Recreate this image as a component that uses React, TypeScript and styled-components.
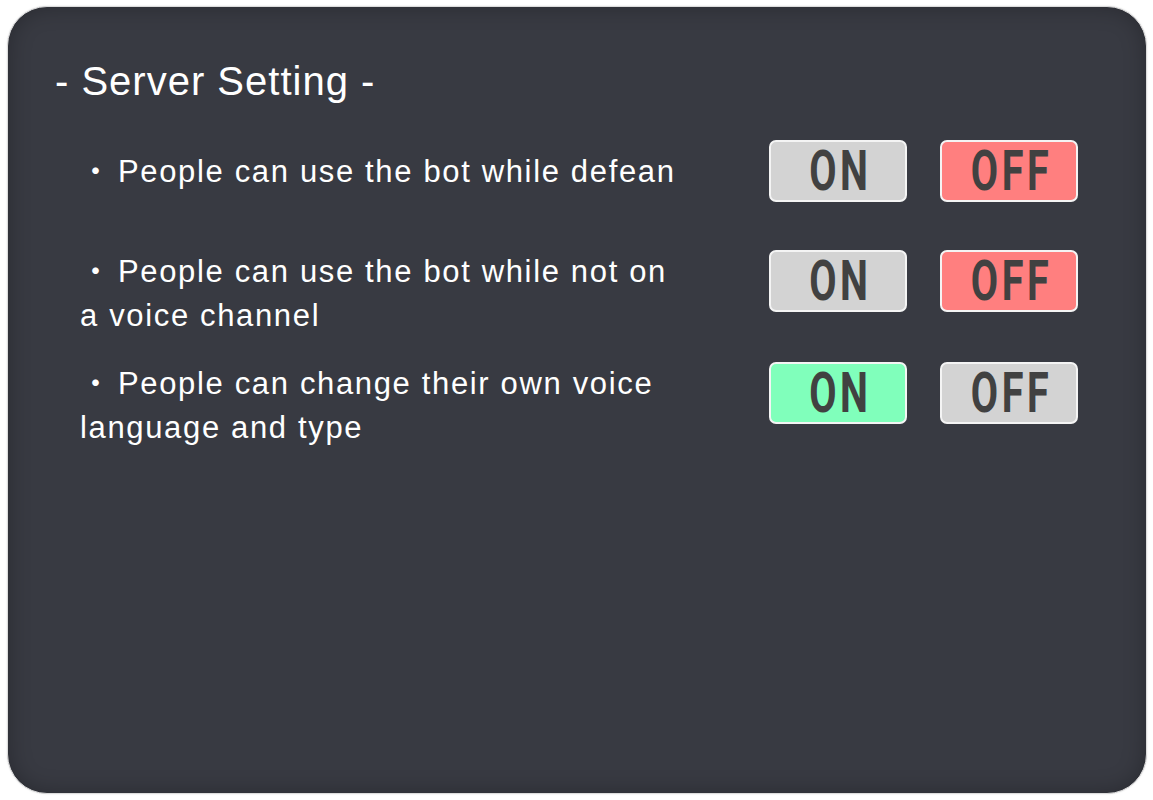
import React from "react";
import styled, { createGlobalStyle } from "styled-components";

const Global = createGlobalStyle`
  html, body { margin: 0; padding: 0; background: #ffffff; }
  body { font-family: "Liberation Sans", "Noto Sans CJK JP", sans-serif; }
`;

const Page = styled.div`
  width: 1153px;
  height: 800px;
  padding: 6px 6px 6px 7px;
  box-sizing: border-box;
`;

const Panel = styled.section`
  width: 1140px;
  height: 788px;
  box-sizing: border-box;
  border-radius: 40px;
  background: #383a42;
  border: 1px solid #dcdcdc;
  box-shadow: inset 0 0 22px rgba(0, 0, 0, 0.28), 0 0 2px rgba(0, 0, 0, 0.12);
  padding: 52px 68px 0 47px;
  display: flex;
  flex-direction: column;
`;

const Title = styled.h1`
  margin: 0;
  font-family: "Liberation Sans", sans-serif;
  font-weight: 400;
  font-size: 40px;
  line-height: 44px;
  color: #ffffff;
  letter-spacing: 1px;
`;

const List = styled.div`
  margin-top: 37px;
  padding-left: 25px;
  display: flex;
  flex-direction: column;
  gap: 24px;
`;

const Row = styled.div`
  display: flex;
  align-items: flex-start;
  justify-content: space-between;
  min-height: 86px;
`;

const Label = styled.div<{ $offset: number }>`
  margin-top: ${(p) => p.$offset}px;
  font-family: "Liberation Sans", "Noto Sans CJK JP", sans-serif;
  font-size: 31px;
  line-height: 44px;
  letter-spacing: 1.65px;
  color: #ffffff;
  white-space: nowrap;
`;

const Bullet = styled.span`
  font-family: "Noto Sans CJK JP", sans-serif;
  display: inline-block;
  width: 24px;
  text-align: center;
  margin-right: 14px;
  letter-spacing: 0;
`;

const Buttons = styled.div`
  display: flex;
  gap: 33px;
`;

const Toggle = styled.div<{ $tone: "gray" | "red" | "green" }>`
  width: 138px;
  height: 62px;
  box-sizing: border-box;
  border: 2px solid #f4f4f4;
  border-radius: 7px;
  background: ${(p) =>
    p.$tone === "red" ? "#ff7f7f" : p.$tone === "green" ? "#80ffbb" : "#d3d3d3"};
  display: flex;
  align-items: center;
  justify-content: center;
`;

const ToggleText = styled.span`
  font-family: Roboto, "DejaVu Sans Condensed", sans-serif;
  font-weight: 700;
  font-size: 55px;
  line-height: 56px;
  color: #414141;
  display: inline-block;
  letter-spacing: 5px;
  margin-right: -5px;
  transform: scaleX(0.72);
`;

type Item = { lines: string[]; on: boolean; offset: number };

const items: Item[] = [
  { lines: ["People can use the bot while defean"], on: false, offset: 7 },
  { lines: ["People can use the bot while not on", "a voice channel"], on: false, offset: -3 },
  { lines: ["People can change their own voice", "language and type"], on: true, offset: -3 },
];

export default function App() {
  return (
    <>
      <Global />
      <Page>
        <Panel>
          <Title>- Server Setting -</Title>
          <List>
            {items.map((it, i) => (
              <Row key={i}>
                <Label $offset={it.offset}>
                  <Bullet>・</Bullet>
                  {it.lines[0]}
                  {it.lines.slice(1).map((l, j) => (
                    <React.Fragment key={j}>
                      <br />
                      {l}
                    </React.Fragment>
                  ))}
                </Label>
                <Buttons>
                  <Toggle $tone={it.on ? "green" : "gray"}>
                    <ToggleText>ON</ToggleText>
                  </Toggle>
                  <Toggle $tone={it.on ? "gray" : "red"}>
                    <ToggleText>OFF</ToggleText>
                  </Toggle>
                </Buttons>
              </Row>
            ))}
          </List>
        </Panel>
      </Page>
    </>
  );
}
